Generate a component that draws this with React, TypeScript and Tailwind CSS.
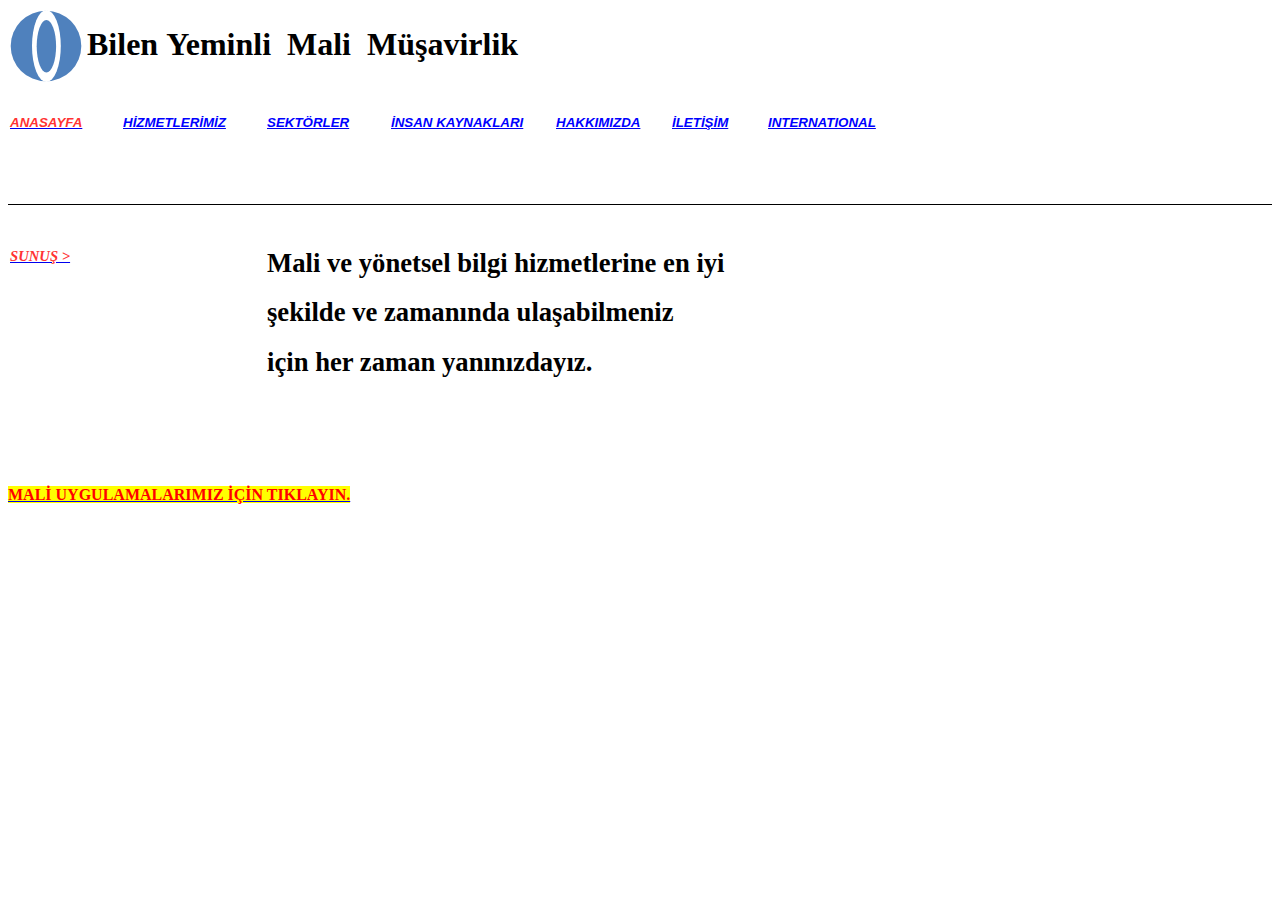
import React from 'react'

interface NavItem {
    label: string;
    width: string;
    color: string;
}

const navItems: NavItem[] = [
    { label: 'ANASAYFA', width: 'w-[113px]', color: 'text-[#ff3333]' },
    { label: 'HİZMETLERİMİZ', width: 'w-[144px]', color: 'text-[#0000ff]' },
    { label: 'SEKTÖRLER', width: 'w-[124px]', color: 'text-[#0000ff]' },
    { label: 'İNSAN KAYNAKLARI', width: 'w-[165px]', color: 'text-[#0000ff]' },
    { label: 'HAKKIMIZDA', width: 'w-[116px]', color: 'text-[#0000ff]' },
    { label: 'İLETİŞİM', width: 'w-[96px]', color: 'text-[#0000ff]' },
    { label: 'INTERNATIONAL', width: 'w-[120px]', color: 'text-[#0000ff]' },
];

const Logo: React.FC = () => (
    <svg width="72" height="72" viewBox="0 0 72 72" className="shrink-0">
        <circle cx="36" cy="36" r="35.3" fill="#4f81bd" />
        <ellipse cx="36.4" cy="36" rx="14.4" ry="36" fill="#fff" />
        <ellipse cx="36.4" cy="36.3" rx="9.7" ry="26.2" fill="#4f81bd" />
    </svg>
)

const App: React.FC = () => {
    return (
        <div className="px-2 pt-[10px] bg-white text-black font-['Liberation_Serif',serif]">
            <header className="flex h-[72px] pl-[2px]">
                <Logo />
                <h1 className="ml-[5px] mt-[16px] text-[32px] leading-[37px] font-bold whitespace-pre">
                    {'Bilen\u00a0Yeminli\u00a0 Mali\u00a0 Müşavirlik'}
                </h1>
            </header>

            <nav className="flex mt-[33px] pl-[2px] font-['Liberation_Sans',sans-serif] text-[13.333px] leading-[15px] font-bold italic">
                {navItems.map((item) => (
                    <div key={item.label} className={`shrink-0 whitespace-nowrap ${item.width}`}>
                        <a href="#" className="underline text-[#0000ee]">
                            <span className={item.color}>{item.label}</span>
                        </a>
                    </div>
                ))}
            </nav>

            <hr className="mt-[74px] border-t border-black" />

            <main className="flex mt-[33px] pl-[2px]">
                <div className="w-[257px] pt-[10px] text-[14.667px] leading-[17px] font-bold italic">
                    <a href="#" className="underline text-[#0000ee]">
                        <span className="text-[#ff3333]">{'SUNUŞ >'}</span>
                    </a>
                </div>
                <div className="pt-[0.5px] text-[26.667px] leading-[49.5px] font-bold">
                    <p>Mali ve yönetsel bilgi hizmetlerine en iyi</p>
                    <p>şekilde ve zamanında ulaşabilmeniz</p>
                    <p>için her zaman yanınızdayız.</p>
                </div>
            </main>

            <p className="mt-[98.5px] text-[16px] leading-[18px] font-bold">
                <a href="#" className="underline text-[#0000ee]">
                    <span className="bg-[#ffff00] text-[#ff0000]">MALİ UYGULAMALARIMIZ İÇİN TIKLAYIN.</span>
                </a>
            </p>
        </div>
    )
}

export default App
